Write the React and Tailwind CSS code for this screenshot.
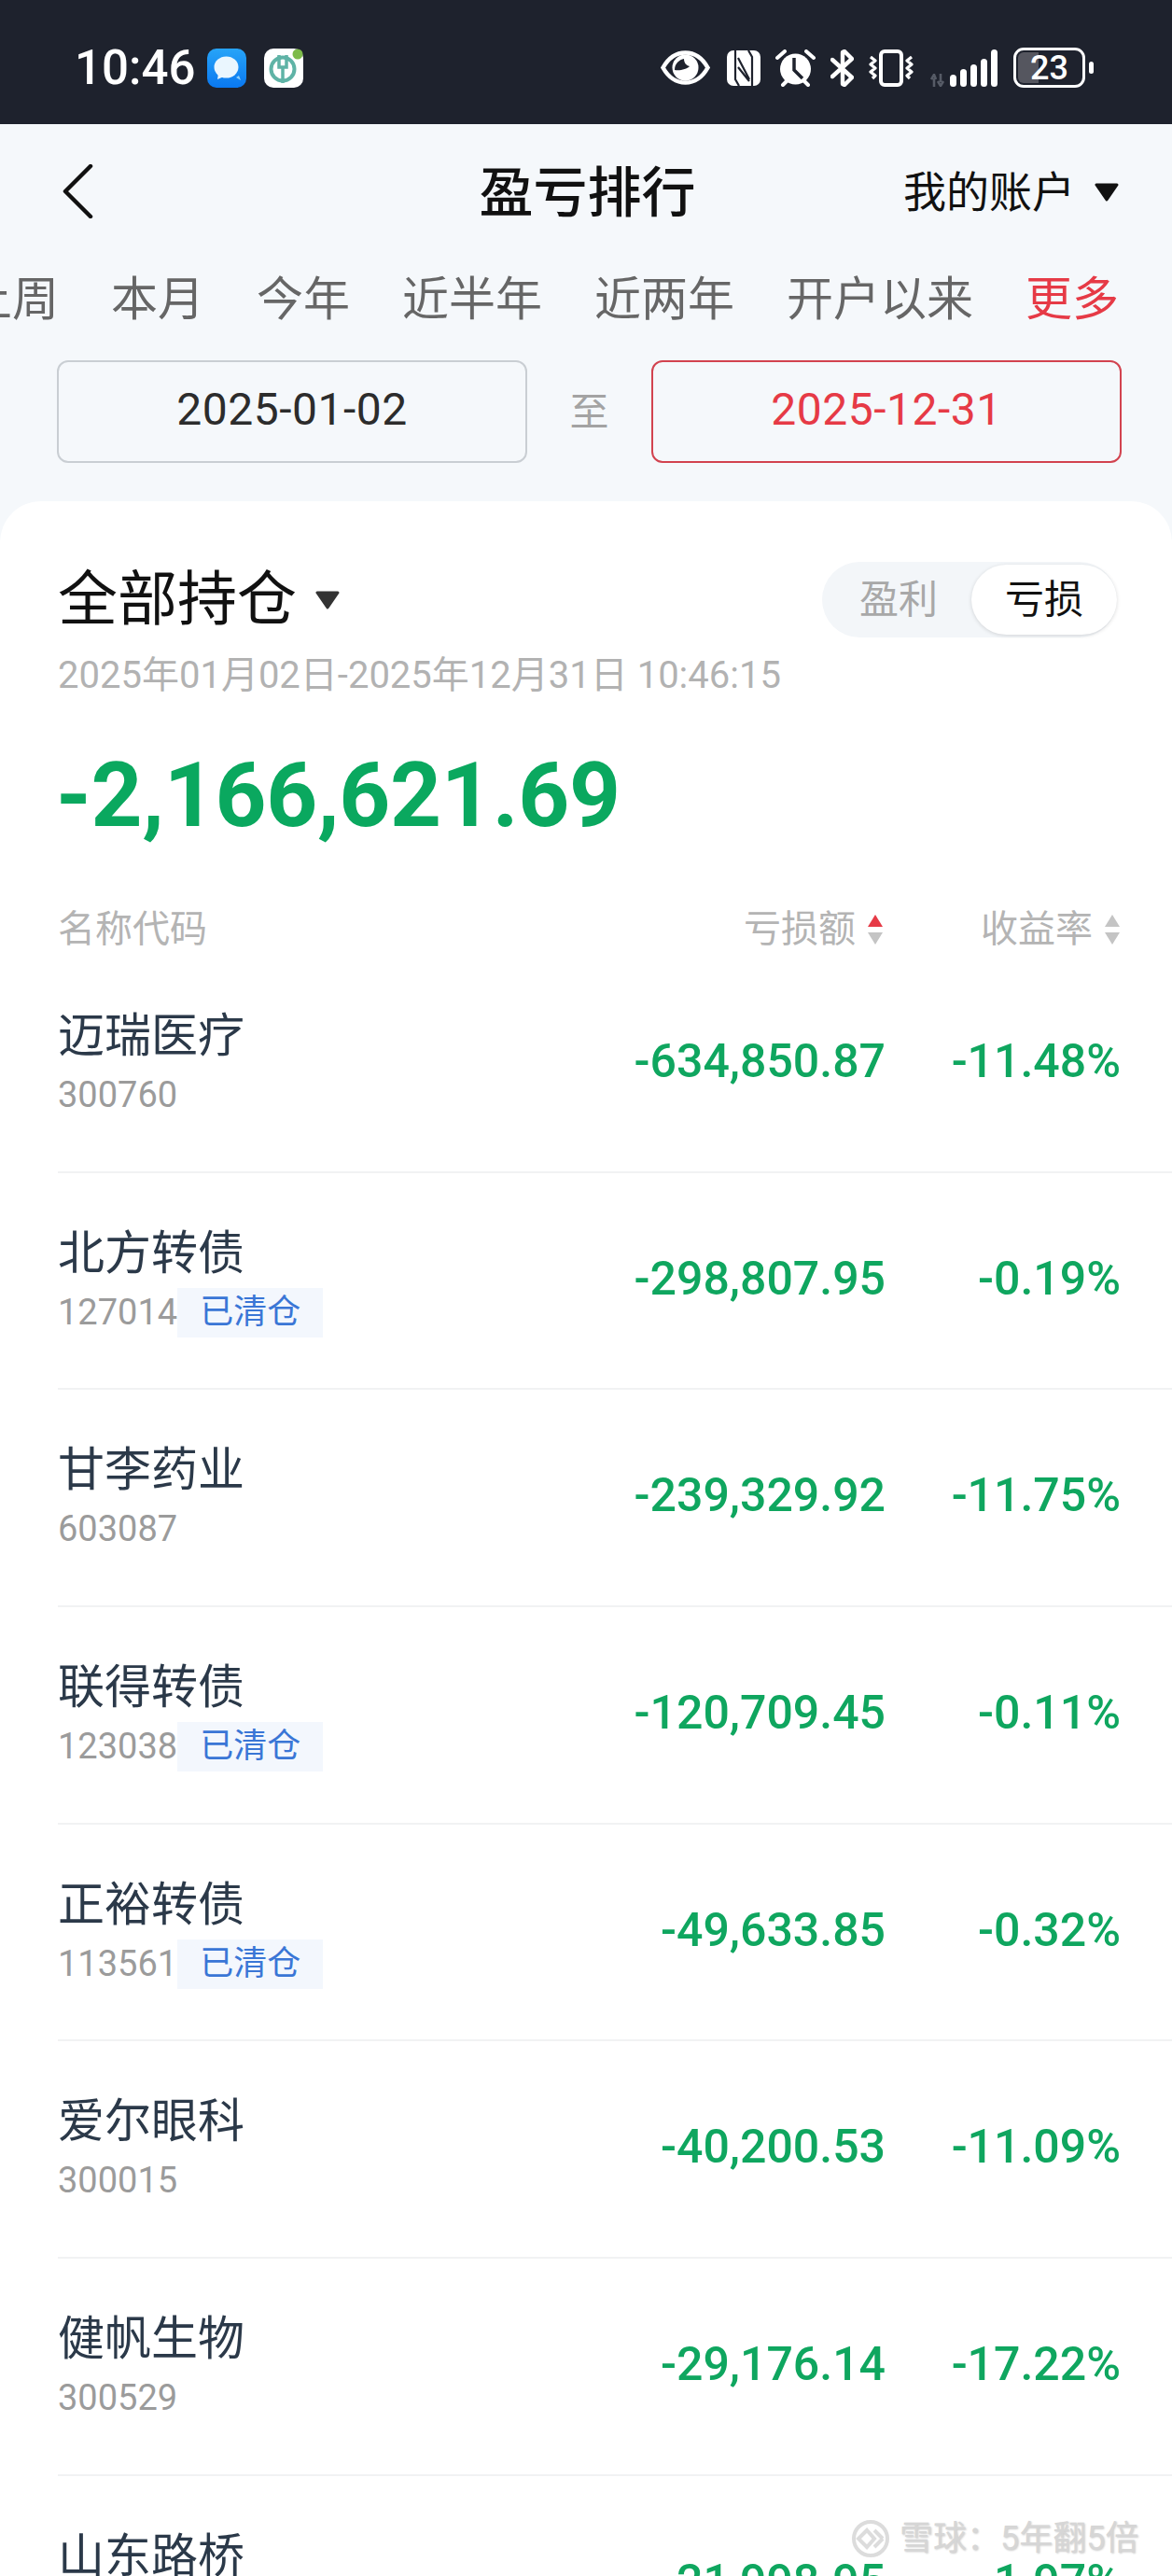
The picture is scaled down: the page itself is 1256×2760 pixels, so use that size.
// 盈亏排行 — one phone screen, status bar down to the cut-off list
const rows = [
  { name: '迈瑞医疗', code: '300760', amount: '-634,850.87', rate: '-11.48%' },
  { name: '北方转债', code: '127014', cleared: true, amount: '-298,807.95', rate: '-0.19%' },
  { name: '甘李药业', code: '603087', amount: '-239,329.92', rate: '-11.75%' },
  { name: '联得转债', code: '123038', cleared: true, amount: '-120,709.45', rate: '-0.11%' },
  { name: '正裕转债', code: '113561', cleared: true, amount: '-49,633.85', rate: '-0.32%' },
  { name: '爱尔眼科', code: '300015', amount: '-40,200.53', rate: '-11.09%' },
  { name: '健帆生物', code: '300529', amount: '-29,176.14', rate: '-17.22%' },
  { name: '山东路桥', amount: '-21,998.95', rate: '-1.97%' },
];

const tabs = ['上周', '本月', '今年', '近半年', '近两年', '开户以来'];

function Caret({ className }) {
  return (
    <svg viewBox="0 0 28 20" className={className}>
      <path d="M3 2h22L14 18z" fill="currentColor" stroke="currentColor" strokeWidth="3" strokeLinejoin="round" />
    </svg>
  );
}

function SortArrows({ active }) {
  return (
    <svg viewBox="0 0 18 34" className="ml-[12px] h-[34px] w-[18px] shrink-0">
      <path d="M9 1l8 13H1z" fill={active ? '#e63a46' : '#c4c4c4'} />
      <path d="M9 33L1 20h16z" fill="#c4c4c4" />
    </svg>
  );
}

function Eye() {
  return (
    <svg viewBox="0 0 53 37" className="h-[37px] w-[53px]">
      <path d="M2.5 18.5C9 7 17 2.5 26.5 2.5S44 7 50.5 18.5C44 30 36 34.5 26.5 34.5S9 30 2.5 18.5Z" fill="none" stroke="#fff" strokeWidth="4.5" />
      <circle cx="26.5" cy="18.5" r="14" fill="#fff" />
      <path d="M15 21c0-7 5-11 10-12 0 4 2 7 6 8-3 3-10 5-16 4z" fill="#1e222d" />
    </svg>
  );
}

function Nfc() {
  return (
    <svg viewBox="0 0 36 38" className="h-[38px] w-[36px]">
      <rect width="36" height="38" rx="7" fill="#fff" />
      <path d="M9 0v31l4 7M27 38V7l-4-7M12 8l12 23M12 18l12 15" fill="none" stroke="#1e222d" strokeWidth="2.2" />
    </svg>
  );
}

function Alarm() {
  return (
    <svg viewBox="0 0 43 40" className="h-[40px] w-[43px]">
      <path d="M2 9l8-7M41 9l-8-7M8 38l5-5M35 38l-5-5" stroke="#fff" strokeWidth="4" strokeLinecap="round" />
      <circle cx="21.5" cy="21" r="16.5" fill="#fff" />
      <path d="M20 9v13l9 9" fill="none" stroke="#1e222d" strokeWidth="3.5" />
    </svg>
  );
}

function Bluetooth() {
  return (
    <svg viewBox="0 0 25 40" className="h-[40px] w-[25px]">
      <path d="M2 11l21 19-8 8-2-1V3l2-1 8 8L2 29" fill="none" stroke="#fff" strokeWidth="4.4" strokeLinejoin="round" strokeLinecap="round" />
    </svg>
  );
}

function Vibrate() {
  return (
    <svg viewBox="0 0 48 40" className="h-[40px] w-[48px]">
      <rect x="13" y="2" width="22" height="36" rx="4" fill="none" stroke="#fff" strokeWidth="4" />
      <path d="M2 8l5 4-5 4 5 4-5 4 5 4-3 3M46 8l-5 4 5 4-5 4 5 4-5 4 3 3" fill="none" stroke="#fff" strokeWidth="3.2" strokeLinejoin="round" />
    </svg>
  );
}

function DataArrows() {
  return (
    <svg viewBox="0 0 16 14" className="h-[14px] w-[16px] self-end">
      <path d="M4 14V5M1 6l3-5 2 5M11 0v9M8 8l3 5 3-5" fill="none" stroke="#565b66" strokeWidth="2.6" />
    </svg>
  );
}

function Signal() {
  return (
    <svg viewBox="0 0 51 40" className="h-[40px] w-[51px]">
      <rect x="0" y="27" width="7" height="13" rx="3.5" fill="#fff" />
      <rect x="11" y="21" width="7" height="19" rx="3.5" fill="#fff" />
      <rect x="22" y="16" width="7" height="24" rx="3.5" fill="#fff" />
      <rect x="33" y="10" width="7" height="30" rx="3.5" fill="#fff" />
      <rect x="44" y="0" width="7" height="40" rx="3.5" fill="#fff" />
    </svg>
  );
}

function Battery() {
  return (
    <div className="flex items-center gap-[4px]">
      <div className="relative flex h-[43px] w-[77px] items-center justify-center overflow-hidden rounded-[11px] border-[3px] border-white">
        <div className="absolute inset-y-[2px] left-[2px] w-[22px] rounded-l-[6px] bg-[#55565f]" />
        <span className="relative text-[36px] leading-none font-medium text-white">23</span>
      </div>
      <div className="h-[13px] w-[5px] rounded-full bg-white" />
    </div>
  );
}

function MessageApp() {
  return (
    <svg viewBox="0 0 42 42" className="h-[42px] w-[42px]">
      <defs>
        <linearGradient id="msgBg" x1="0" y1="0" x2="0" y2="1">
          <stop offset="0" stopColor="#27a4f8" />
          <stop offset="1" stopColor="#0a78f0" />
        </linearGradient>
      </defs>
      <rect width="42" height="42" rx="10" fill="url(#msgBg)" />
      <path d="M31 31l5 3-2-5z" fill="#8fd0fb" />
      <ellipse cx="20.5" cy="20" rx="13" ry="11.5" fill="#eaf6fe" />
      <path d="M12 27l-1 6 7-3z" fill="#eaf6fe" />
    </svg>
  );
}

function BankApp() {
  return (
    <svg viewBox="0 0 42 42" className="h-[42px] w-[42px]">
      <rect width="42" height="42" rx="10" fill="#fff" />
      <circle cx="20" cy="22" r="12.5" fill="none" stroke="#5fb3a6" strokeWidth="4" />
      <path d="M16 7v13h8V7M20 20v17" fill="none" stroke="#5fb3a6" strokeWidth="3.5" />
      <circle cx="36" cy="6" r="5.5" fill="#7dbb4a" />
    </svg>
  );
}

function Row({ row }) {
  return (
    <div className="h-[232.7px] border-b-2 border-[#f1f2f3] pr-[55px]">
      <div className="flex h-full">
        <div className="flex-1 pt-[56px]">
          <div className="text-[50px] leading-[60px] text-[#2b3949]">{row.name}</div>
          <div className="mt-[7px] flex h-[53px] items-center">
            <span className="text-[38px] text-[#9b9b9b]">{row.code}</span>
            {row.cleared && (
              <span className="bg-[#f3f7fd] px-[24px] text-[36px] leading-[53px] text-[#3a76d6]">已清仓</span>
            )}
          </div>
        </div>
        <div className="flex items-start pt-[83px] text-[50px] leading-[60px] font-medium text-[#0fa65f]">
          <span>{row.amount}</span>
          <span className="w-[252px] text-right">{row.rate}</span>
        </div>
      </div>
    </div>
  );
}

export default function App() {
  return (
    <div className="relative h-[2760px] w-[1256px] overflow-hidden bg-[#f5f8fb] font-[family-name:Roboto,'Noto_Sans_CJK_SC',sans-serif]">
      <div className="flex h-[133px] items-center justify-between bg-[#1e222d] pt-[12px] pr-[84px] pl-[80px]">
        <div className="flex items-center">
          <span className="text-[51px] leading-none font-medium text-white">10:46</span>
          <div className="ml-[13px]"><MessageApp /></div>
          <div className="ml-[19px]"><BankApp /></div>
        </div>
        <div className="flex h-[43px] items-center">
          <Eye />
          <div className="ml-[18px]"><Nfc /></div>
          <div className="ml-[16px]"><Alarm /></div>
          <div className="ml-[16px]"><Bluetooth /></div>
          <div className="ml-[16px]"><Vibrate /></div>
          <div className="ml-[18px] flex h-[40px]"><DataArrows /></div>
          <div className="ml-[5px]"><Signal /></div>
          <div className="ml-[17px]"><Battery /></div>
        </div>
      </div>

      <div className="grid h-[144px] grid-cols-[1fr_auto_1fr] items-center">
        <div className="pl-[66px]">
          <svg viewBox="0 0 34 58" className="h-[58px] w-[34px]">
            <path d="M31 2L4 29l27 27" fill="none" stroke="#111" strokeWidth="4.5" strokeLinecap="round" strokeLinejoin="round" />
          </svg>
        </div>
        <div className="mt-[4px] ml-[3px] text-[58px] leading-none font-medium text-[#111]">盈亏排行</div>
        <div className="mt-[2px] flex items-center justify-end pr-[56px] text-[46px] leading-none text-[#111]">
          我的账户
          <Caret className="ml-[20px] h-[20px] w-[28px] text-[#111]" />
        </div>
      </div>

      <div className="flex h-[86px] items-center justify-end gap-[56px] pt-[2px] pr-[57px] text-[50px] leading-none whitespace-nowrap text-[#666]">
        {tabs.map((t) => (
          <span key={t}>{t}</span>
        ))}
        <span className="text-[#e63a46]">更多</span>
      </div>

      <div className="mt-[23px] flex items-center pr-[54px] pl-[61px]">
        <div className="flex h-[110px] w-[504px] items-center justify-center rounded-[12px] border-2 border-[#c9ced3] pb-[4px] text-[48px] leading-none tracking-[0.5px] text-[#2c2c2c]">
          2025-01-02
        </div>
        <div className="flex-1 text-center text-[42px] text-[#a3a3a3]">至</div>
        <div className="flex h-[110px] w-[504px] items-center justify-center rounded-[12px] border-2 border-[#d2434f] pb-[4px] text-[48px] leading-none tracking-[0.5px] text-[#e63a46]">
          2025-12-31
        </div>
      </div>

      <div className="mt-[41px] rounded-t-[44px] bg-white pt-[65px] pl-[62px]">
        <div className="flex h-[81px] items-center justify-between pr-[59px]">
          <div className="flex items-center">
            <span className="text-[64px] leading-none text-[#111]">全部持仓</span>
            <Caret className="ml-[19px] h-[20px] w-[28px] text-[#333]" />
          </div>
          <div className="flex h-[81px] w-[316px] items-center rounded-full bg-[#f3f6f9]">
            <span className="flex-1 pl-[4px] text-center text-[42px] text-[#a8a8a8]">盈利</span>
            <span className="flex h-[75px] w-[156px] items-center justify-center rounded-full bg-white text-[42px] text-[#111] shadow-[0_1px_4px_rgba(0,0,0,0.14)]">亏损</span>
          </div>
        </div>

        <div className="mt-[21px] text-[40px] leading-[40px] text-[#b2b2b2]">2025年01月02日-2025年12月31日 10:46:15</div>

        <div className="mt-[60px] -ml-[2px] text-[96px] leading-[96px] font-bold tracking-[-0.3px] text-[#0aa85f]">-2,166,621.69</div>

        <div className="mt-[68px] flex h-[56px] items-center pr-[55px] text-[40px] leading-none text-[#b4b4b4]">
          <span className="flex-1">名称代码</span>
          <span>亏损额</span>
          <SortArrows active />
          <span className="ml-[104px]">收益率</span>
          <SortArrows />
        </div>

        {rows.map((r) => (
          <Row key={r.name} row={r} />
        ))}
      </div>

      {/* watermark laid over the last row */}
      <div className="absolute top-[2699px] left-[912px] flex items-center text-[36px] leading-none text-[#d6d6d6] [text-shadow:1px_1px_2px_rgba(0,0,0,0.2)]">
        <svg viewBox="0 0 42 42" className="mr-[10px] h-[42px] w-[42px]">
          <circle cx="21" cy="21" r="18" fill="none" stroke="#dcdcdc" strokeWidth="4" />
          <path d="M8 21l9-9 8 9-8 9zM34 21l-9-9M25 30l9-9" fill="none" stroke="#dcdcdc" strokeWidth="4" />
        </svg>
        <span>雪球：5年翻5倍</span>
      </div>
    </div>
  );
}
